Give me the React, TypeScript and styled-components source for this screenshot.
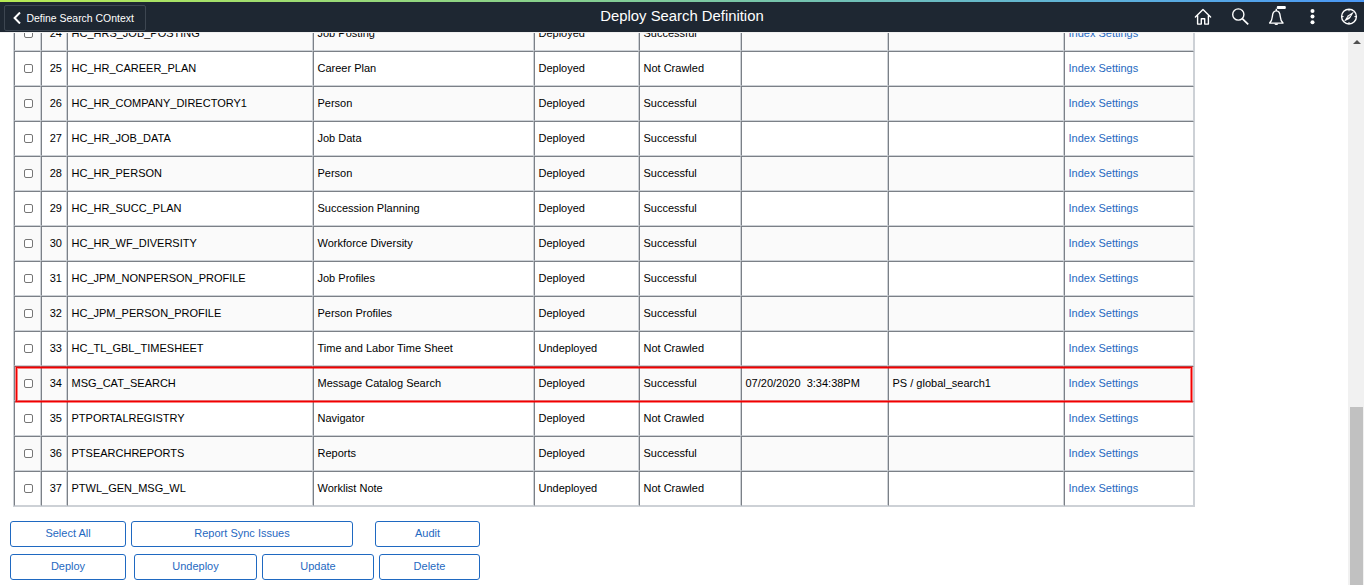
import React from 'react';
import styled, { createGlobalStyle } from 'styled-components';

const GlobalStyle = createGlobalStyle`
  * { box-sizing: border-box; }
  html, body { margin: 0; padding: 0; overflow: hidden; background: #fff; }
  body, button, input { font-family: "Liberation Sans", Arial, sans-serif; }
`;

const Page = styled.div`
  width: 1364px;
  height: 585px;
  display: flex;
  flex-direction: column;
  overflow: hidden;
`;

const AccentBar = styled.div`
  flex: none;
  height: 2px;
  background: linear-gradient(90deg, #b7ea54 0%, #85cf8f 42%, #5fb3d9 80%, #4a97f5 100%);
`;

const Header = styled.header`
  flex: none;
  height: 30px;
  display: grid;
  grid-template-columns: 1fr auto 1fr;
  align-items: center;
  background: #1e2732;
  color: #fff;
`;

const BackButton = styled.button`
  justify-self: start;
  width: 142px;
  height: 26px;
  margin: 2px 0 0 4px;
  padding: 0 0 0 8px;
  display: flex;
  align-items: center;
  gap: 4.5px;
  border: 1px solid #3d4651;
  border-radius: 2px;
  background: transparent;
  color: #fff;
  font-size: 10.45px;
  white-space: nowrap;
`;

const Title = styled.h1`
  margin: 0;
  padding-bottom: 2px;
  font-size: 14.85px;
  font-weight: 400;
  line-height: 18px;
`;

const HeaderIcons = styled.div`
  justify-self: end;
  display: flex;
  align-items: center;
  gap: 16.5px;
  padding-right: 5px;
  svg { display: block; overflow: visible; }
`;

const Body = styled.div`
  flex: 1;
  min-height: 0;
  display: flex;
`;

const Content = styled.main`
  flex: 1;
  min-width: 0;
  overflow: hidden;
  border-top: 1px solid #f0f0f0;
`;

const Grid = styled.div`
  width: 1182px;
  margin: -18px 0 0 13px;
  border: 1px solid #cdd1d6;
`;

const Row = styled.div<{ $shaded: boolean }>`
  position: relative;
  display: grid;
  grid-template-columns: 27px 26px 246px 221px 105px 102px 147px 176px 130px;
  height: 35px;
  background: ${(p) => (p.$shaded ? '#fafafa' : '#fff')};
`;

const Cell = styled.div<{ $align?: 'center' | 'right' }>`
  display: flex;
  align-items: center;
  justify-content: ${(p) => (p.$align === 'center' ? 'center' : p.$align === 'right' ? 'flex-end' : 'flex-start')};
  padding: 0 ${(p) => (p.$align === 'right' ? 4 : 3)}px 0 ${(p) => (p.$align ? 3 : 3.5)}px;
  border: 1px solid;
  border-color: #7b8087 #cdd1d6 #cdd1d6 #7b8087;
  color: #000;
  font-size: 11px;
  line-height: 13px;
  white-space: pre;
`;

const Check = styled.input`
  appearance: none;
  width: 9px;
  height: 9px;
  margin: 0 0 1px 2px;
  border: 1px solid #767676;
  border-radius: 2px;
  background: #fff;
`;

const Link = styled.a`
  color: #1f69c1;
  text-decoration: none;
`;

const Highlight = styled.div`
  position: absolute;
  z-index: 1;
  left: 2px;
  top: 1px;
  width: 1176px;
  height: 35px;
  border: 1px solid #f00000;
  box-shadow: 0 0 0 1px rgba(255, 0, 0, 0.5), inset 0 0 0 1px rgba(255, 0, 0, 0.5);
  pointer-events: none;
`;

const ButtonRow = styled.div<{ $top: number }>`
  display: flex;
  margin: ${(p) => p.$top}px 0 0 10px;
`;

const ActionButton = styled.button<{ $width: number; $gap?: number }>`
  width: ${(p) => p.$width}px;
  height: 26px;
  margin: 0 0 0 ${(p) => p.$gap ?? 0}px;
  padding: 0 0 2px;
  border: 1px solid #1f69c1;
  border-radius: 3px;
  background: #fff;
  color: #1f69c1;
  font-size: 11px;
`;

const ScrollTrack = styled.aside`
  flex: none;
  width: 16px;
  display: flex;
  flex-direction: column;
  align-items: center;
  background: #f1f1f1;
`;

const ScrollArrow = styled.div`
  margin: 8px 0 0 1px;
  border: 4px solid transparent;
  border-top: 0;
  border-bottom: 4px solid #505050;
`;

const ScrollThumb = styled.div`
  width: 13px;
  height: 178px;
  margin: auto 0 0 1px;
  background: #c1c1c1;
`;

const rows: string[][] = [
  ['24', 'HC_HRS_JOB_POSTING', 'Job Posting', 'Deployed', 'Successful'],
  ['25', 'HC_HR_CAREER_PLAN', 'Career Plan', 'Deployed', 'Not Crawled'],
  ['26', 'HC_HR_COMPANY_DIRECTORY1', 'Person', 'Deployed', 'Successful'],
  ['27', 'HC_HR_JOB_DATA', 'Job Data', 'Deployed', 'Successful'],
  ['28', 'HC_HR_PERSON', 'Person', 'Deployed', 'Successful'],
  ['29', 'HC_HR_SUCC_PLAN', 'Succession Planning', 'Deployed', 'Successful'],
  ['30', 'HC_HR_WF_DIVERSITY', 'Workforce Diversity', 'Deployed', 'Successful'],
  ['31', 'HC_JPM_NONPERSON_PROFILE', 'Job Profiles', 'Deployed', 'Successful'],
  ['32', 'HC_JPM_PERSON_PROFILE', 'Person Profiles', 'Deployed', 'Successful'],
  ['33', 'HC_TL_GBL_TIMESHEET', 'Time and Labor Time Sheet', 'Undeployed', 'Not Crawled'],
  ['34', 'MSG_CAT_SEARCH', 'Message Catalog Search', 'Deployed', 'Successful', '07/20/2020  3:34:38PM', 'PS / global_search1'],
  ['35', 'PTPORTALREGISTRY', 'Navigator', 'Deployed', 'Not Crawled'],
  ['36', 'PTSEARCHREPORTS', 'Reports', 'Deployed', 'Successful'],
  ['37', 'PTWL_GEN_MSG_WL', 'Worklist Note', 'Undeployed', 'Not Crawled'],
];

const stroke = { fill: 'none', stroke: '#fff', strokeWidth: 1.4 } as const;

const BackIcon = () => (
  <svg width="9" height="12" viewBox="0 0 9 12" fill="none" stroke="#fff" strokeWidth="2">
    <path d="M7 .5 1.600 6 7 11.500" />
  </svg>
);

const HomeIcon = () => (
  <svg width="20" height="20" viewBox="0 0 20 20" {...stroke}>
    <path d="M2.4 10 10 2.500l7.600 7.500M4.600 8.400v8.700h3.700v-5.400h3.400v5.400h3.700V8.400" strokeLinejoin="round" strokeLinecap="round" />
  </svg>
);

const SearchIcon = () => (
  <svg width="20" height="20" viewBox="0 0 20 20" {...stroke}>
    <circle cx="8.300" cy="7.500" r="5.600" />
    <path d="m12.300 11.600 5.900 5.800" strokeWidth="1.700" />
  </svg>
);

const BellIcon = () => (
  <svg width="20" height="20" viewBox="0 0 20 20" {...stroke}>
    <path d="M3.600 16.100c2.300-2.100 2.500-3.400 2.800-6.800C6.600 6 7.800 3.900 10.300 3.900s3.700 2.100 3.900 5.400c.3 3.400.5 4.700 2.800 6.800z" strokeLinejoin="round" />
    <path d="M10.300 3.900V1.800" />
    <path d="M8.300 16.500h4c-.3 1.200-1 1.600-2 1.600s-1.700-.4-2-1.600z" fill="#fff" stroke="none" />
    <rect x="10.800" y="-1" width="9" height="3" rx="1" fill="#fff" stroke="none" />
  </svg>
);

const MoreIcon = () => (
  <svg width="20" height="20" viewBox="0 0 20 20" fill="#fff">
    <circle cx="9.500" cy="4" r="2" />
    <circle cx="9.500" cy="9.600" r="2" />
    <circle cx="9.500" cy="15.200" r="2" />
  </svg>
);

const CompassIcon = () => (
  <svg width="20" height="20" viewBox="0 0 20 20" {...stroke}>
    <circle cx="10" cy="9.600" r="7.400" />
    <path d="M10 2.200v2M10 15v2M2.600 9.600h2M15.400 9.600h2" strokeWidth="1" />
    <path d="m15 4.600-3.600 6.200-1.200 1.200-5.200 2.600 3.800-6.200z" fill="#fff" stroke="none" />
    <path d="m9 10.600 2.200-2.200" stroke="#1e2732" strokeWidth="1" />
  </svg>
);

export default function App() {
  return (
    <Page>
      <GlobalStyle />
      <AccentBar />
      <Header>
        <BackButton><BackIcon />Define Search COntext</BackButton>
        <Title>Deploy Search Definition</Title>
        <HeaderIcons>
          <HomeIcon />
          <SearchIcon />
          <BellIcon />
          <MoreIcon />
          <CompassIcon />
        </HeaderIcons>
      </Header>
      <Body>
        <Content>
          <Grid>
            {rows.map(([num, name, title, deploy, crawl, date = '', server = ''], i) => (
              <Row key={num} $shaded={i % 2 === 0}>
                <Cell $align="center"><Check type="checkbox" /></Cell>
                <Cell $align="right">{num}</Cell>
                <Cell>{name}</Cell>
                <Cell>{title}</Cell>
                <Cell>{deploy}</Cell>
                <Cell>{crawl}</Cell>
                <Cell>{date}</Cell>
                <Cell>{server}</Cell>
                <Cell><Link>Index Settings</Link></Cell>
                {num === '34' && <Highlight />}
              </Row>
            ))}
          </Grid>
          <ButtonRow $top={14}>
            <ActionButton $width={116}>Select All</ActionButton>
            <ActionButton $width={222} $gap={5}>Report Sync Issues</ActionButton>
            <ActionButton $width={105} $gap={22}>Audit</ActionButton>
          </ButtonRow>
          <ButtonRow $top={7}>
            <ActionButton $width={116}>Deploy</ActionButton>
            <ActionButton $width={123} $gap={8}>Undeploy</ActionButton>
            <ActionButton $width={112} $gap={5}>Update</ActionButton>
            <ActionButton $width={101} $gap={5}>Delete</ActionButton>
          </ButtonRow>
        </Content>
        <ScrollTrack>
          <ScrollArrow />
          <ScrollThumb />
        </ScrollTrack>
      </Body>
    </Page>
  );
}
